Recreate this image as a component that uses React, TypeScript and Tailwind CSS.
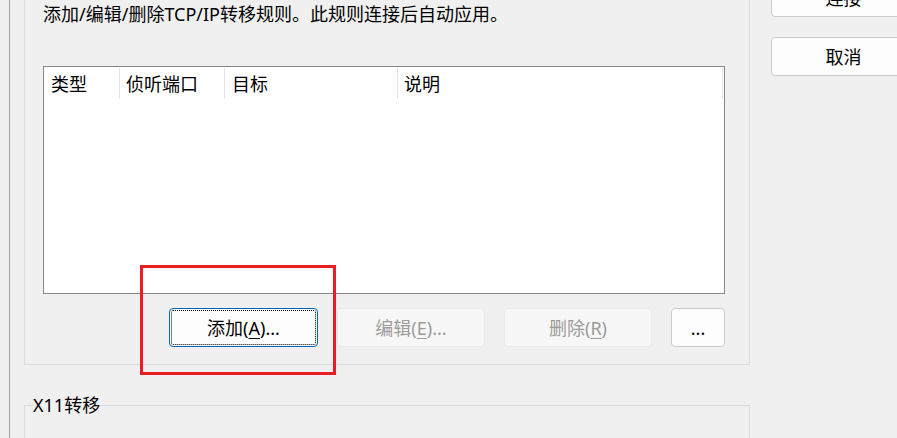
const font = "font-['Noto_Sans','Noto_Sans_CJK_SC',sans-serif]";

function DialogButton({
  children,
  focused = false,
  disabled = false,
  className = "",
}: {
  children: React.ReactNode;
  focused?: boolean;
  disabled?: boolean;
  className?: string;
}) {
  let look = "bg-[#fdfdfd] border-[#cccccc] text-black";
  if (focused) {
    look =
      "bg-[#fdfdfd] border-[#0067c0] text-black outline-1 outline-dotted outline-black outline-offset-[-3px]";
  }
  if (disabled) {
    look = "bg-[#f7f7f7] border-[#eaeaea] text-[#9b9b9b]";
  }
  return (
    <button
      disabled={disabled}
      className={`h-[39px] shrink-0 rounded-[4px] border text-[18px] leading-[24px] ${look} ${className}`}
    >
      {children}
    </button>
  );
}

const columns = [
  { label: "类型", width: "w-[76px]", pad: "pl-[7px]" },
  { label: "侦听端口", width: "w-[105px]", pad: "pl-[6px]" },
  { label: "目标", width: "w-[173px]", pad: "pl-[7px]" },
  { label: "说明", width: "w-[325px]", pad: "pl-[6px]" },
];

export default function App() {
  return (
    <div
      className={`relative flex h-[438px] w-[897px] overflow-hidden bg-[#f0f0f0] text-black ${font}`}
    >
      {/* Left pane */}
      <div className="ml-[9px] h-full border-l border-[#a0a0a0] pl-[14px]">
        {/* TCP/IP forwarding group */}
        <div className="w-[726px] border-x border-b border-[#dcdcdc] pb-[17px] pl-[18px] pr-[24px] pt-[2px]">
          <p className="text-[18px] leading-[24px] whitespace-nowrap">
            添加/编辑/删除TCP/IP转移规则。此规则连接后自动应用。
          </p>

          {/* List view */}
          <div className="mt-[40px] h-[228px] w-[682px] border border-[#828790] bg-white">
            <div className="flex h-[33px] py-[1px]">
              {columns.map((c) => (
                <div
                  key={c.label}
                  className={`${c.width} ${c.pad} flex shrink-0 items-center border-r border-[#e5e5e5] text-[18px] leading-[24px]`}
                >
                  {c.label}
                </div>
              ))}
            </div>
          </div>

          {/* Actions */}
          <div className="mt-[14px] flex justify-end gap-[19px]">
            <DialogButton focused className="w-[149px]">
              添加(<u className="underline-offset-[3px]">A</u>)...
            </DialogButton>
            <DialogButton disabled className="w-[148px]">
              编辑(<u className="underline-offset-[3px]">E</u>)...
            </DialogButton>
            <DialogButton disabled className="w-[148px]">
              删除(<u className="underline-offset-[3px]">R</u>)
            </DialogButton>
            <DialogButton className="w-[54px]">...</DialogButton>
          </div>
        </div>

        {/* X11 forwarding group */}
        <fieldset className="mt-[28px] h-[80px] w-[726px] border border-[#dcdcdc]">
          <legend className="ml-[8px] text-[18px] leading-[24px]">X11转移</legend>
        </fieldset>
      </div>

      {/* Right pane */}
      <div className="-mt-[22px] flex flex-col gap-[20px] pl-[21px]">
        <DialogButton className="w-[145px]">连接</DialogButton>
        <DialogButton className="w-[145px]">取消</DialogButton>
      </div>

      {/* Annotation */}
      <div className="pointer-events-none absolute left-[140px] top-[265px] h-[110px] w-[196px] border-[3px] border-[#ec1c24]" />
    </div>
  );
}
